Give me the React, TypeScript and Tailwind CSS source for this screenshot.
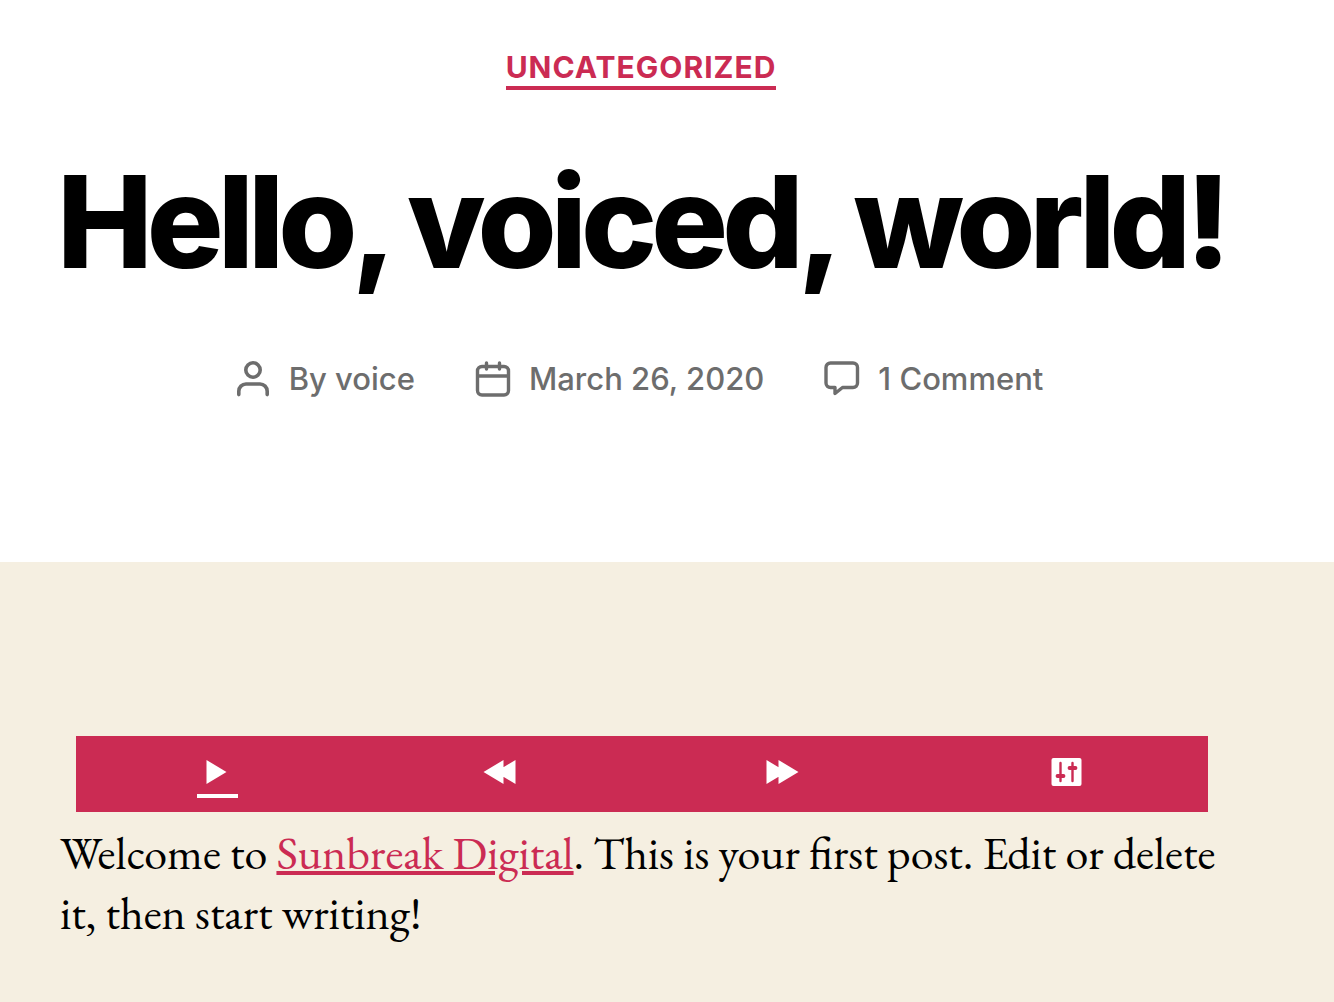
import React from "react";

function PersonIcon() {
  return (
    <svg className="h-9 w-9" viewBox="0 0 36 36" fill="none" stroke="currentColor" strokeWidth="3.6" strokeLinecap="round" aria-hidden="true">
      <circle cx="18" cy="9" r="7.2" />
      <path d="M3.8 33.6v-3.4a7.200 7.200 0 0 1 7.200-7.200h14a7.200 7.200 0 0 1 7.200 7.200v3.400" />
    </svg>
  );
}

function CalendarIcon() {
  return (
    <svg className="h-9 w-9" viewBox="0 0 36 36" fill="none" stroke="currentColor" strokeWidth="3.4" strokeLinecap="round" aria-hidden="true">
      <rect x="2.500" y="5.500" width="31" height="28.500" rx="4.500" />
      <path d="M11.500 2v6M24.500 2v6M3 15h30" />
    </svg>
  );
}

function CommentIcon() {
  return (
    <svg className="h-9 w-9" viewBox="0 0 36 36" fill="none" stroke="currentColor" strokeWidth="3.400" strokeLinejoin="round" aria-hidden="true">
      <path d="M6.500 2h22.500a4.500 4.500 0 0 1 4.500 4.500v15.500a4.500 4.500 0 0 1-4.500 4.500H18.500L11 32.500v-6H6.500a4.500 4.500 0 0 1-4.500-4.500v-15.500a4.500 4.500 0 0 1 4.500-4.500z" />
    </svg>
  );
}

function PlayerButton({ label, active = false, children }: { label: string; active?: boolean; children: React.ReactNode }) {
  return (
    <button aria-label={label} className="flex flex-col items-center pt-[18px]">
      <svg className="h-9 w-9" viewBox="0 0 36 36" fill="currentColor" aria-hidden="true">
        {children}
      </svg>
      {active && <span className="mt-1 h-1 w-[41px] bg-white" />}
    </button>
  );
}

export default function App() {
  return (
    <div className="flex min-h-screen flex-col bg-white text-black">
      <header className="flex flex-col items-center pt-12 pr-[52px] pb-[162px] font-['Inter',sans-serif]">
        <a href="#uncategorized" className="border-b-4 border-[#cb2b53] text-[30px] leading-[38px] font-bold tracking-[1px] text-[#cb2b53]">
          UNCATEGORIZED
        </a>
        <h1 className="mt-[60px] text-[128px] leading-[144px] font-extrabold tracking-[-6px] whitespace-nowrap">Hello, voiced, world!</h1>
        <ul className="mt-[64px] mr-1 flex items-center gap-[60px] text-[31px] leading-[42px] font-medium text-[#6d6d6d]">
          <li className="flex items-center gap-[18px]"><PersonIcon /><a href="#author">By voice</a></li>
          <li className="flex items-center gap-[18px]"><CalendarIcon /><a href="#date">March 26, 2020</a></li>
          <li className="flex items-center gap-[18px]"><CommentIcon /><a href="#comments">1 Comment</a></li>
        </ul>
      </header>
      <main className="flex-1 bg-[#f5efe1] pt-[174px]">
        <div className="mr-[126px] ml-[76px] grid h-[76px] grid-cols-4 bg-[#cb2b53] text-white">
          <PlayerButton label="Play" active>
            <path d="M6.500 6l20 12-20 12z" />
          </PlayerButton>
          <PlayerButton label="Rewind">
            <path d="M.5 18l20-12v24zM12.500 18l20-12v24z" />
          </PlayerButton>
          <PlayerButton label="Forward">
            <path d="M.5 6l20 12-20 12zM12.500 6l20 12-20 12z" />
          </PlayerButton>
          <PlayerButton label="Settings">
            <rect x="2.500" y="4" width="30" height="28" rx="2" />
            <g className="stroke-[#cb2b53]" fill="none" strokeLinecap="round">
              <path d="M11.500 9v18M23.500 9v18" strokeWidth="2.400" />
              <path d="M8.500 22h6M20.500 14h6" strokeWidth="3.800" />
            </g>
          </PlayerButton>
        </div>
        <p className="mt-[11px] mr-[110px] ml-[60px] font-['EB_Garamond','Liberation_Serif',serif] text-[46px] leading-[60px]">
          Welcome to <a href="#sunbreak" className="text-[#cb2b53] underline decoration-4">Sunbreak Digital</a>. This is your first post. Edit or delete it, then start writing!
        </p>
      </main>
    </div>
  );
}
